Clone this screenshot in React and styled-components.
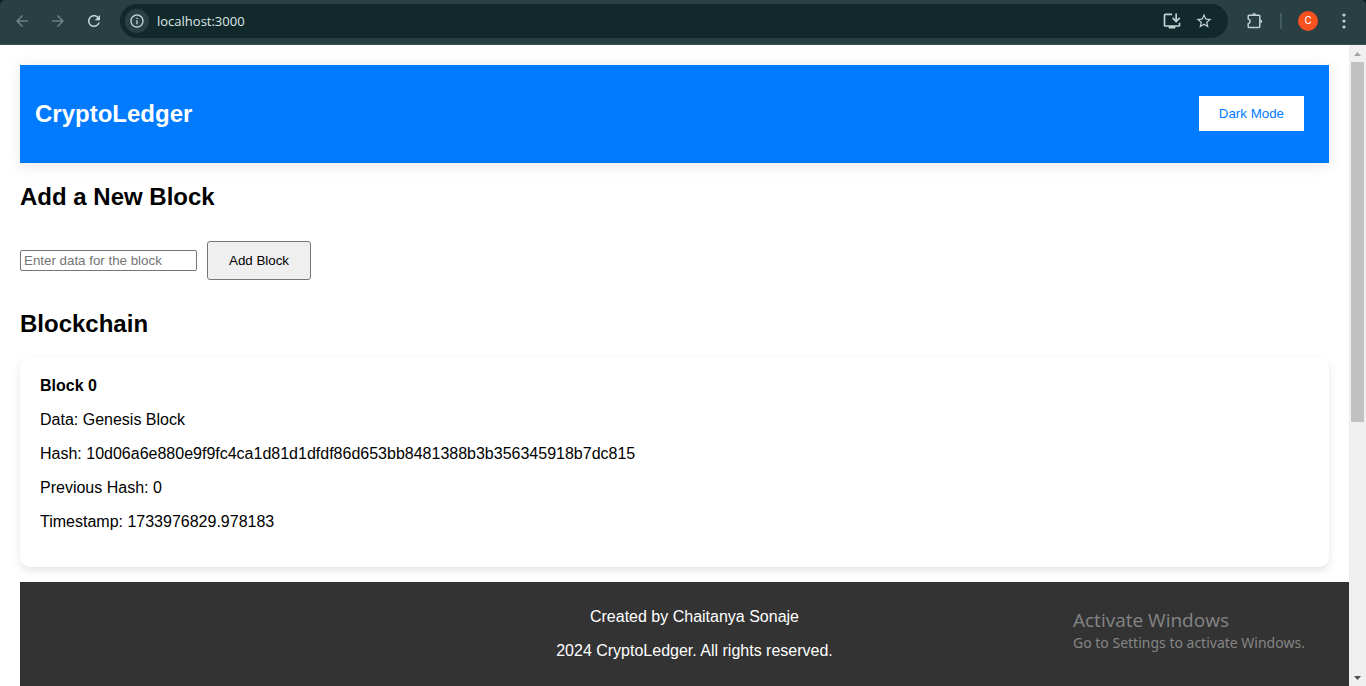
import React, { useState } from "react";
import styled, { createGlobalStyle } from "styled-components";

const GlobalStyle = createGlobalStyle`
  *, *::before, *::after { box-sizing: border-box; }
  body {
    margin: 0;
    background: #0d1c1f;
    font-family: Arial, "Liberation Sans", sans-serif;
    font-size: 16px;
    line-height: 18px;
    color: #000;
  }
`;

const Window = styled.div`
  display: flex;
  flex-direction: column;
  height: 100vh;
  overflow: hidden;
`;

const Toolbar = styled.header`
  display: flex;
  align-items: center;
  flex: none;
  height: 45px;
  padding: 0 10px 2px;
  background: #283f43;
  border-bottom: 1px solid #3b5054;
  border-radius: 5px 5px 0 0;
`;

const ToolButton = styled.button`
  display: grid;
  place-items: center;
  flex: none;
  width: 24px;
  height: 24px;
  padding: 0;
  border: 0;
  border-radius: 12px;
  background: ${(p) => p.$fill || "transparent"};
  color: ${(p) => p.$color || "#c3d2d4"};
`;

const NavGroup = styled.nav`
  display: flex;
  gap: 12px;
  margin-right: 14px;
`;

const AddressBar = styled.div`
  display: flex;
  align-items: center;
  flex: 1;
  gap: 8px;
  height: 34px;
  padding: 0 12px 0 5px;
  border-radius: 17px;
  background: #12292c;
`;

const Address = styled.input`
  flex: 1;
  min-width: 0;
  padding: 0;
  border: 0;
  outline: 0;
  background: transparent;
  color: #dfe7e8;
  font: 13px/20px "Open Sans", "Noto Sans", sans-serif;
`;

const ToolActions = styled.div`
  display: flex;
  align-items: center;
  margin-left: 15px;
`;

const Separator = styled.span`
  width: 2px;
  height: 16px;
  margin: 0 16px 0 13px;
  background: #425b60;
`;

const Avatar = styled.button`
  width: 20px;
  height: 20px;
  margin-right: 14px;
  padding: 0;
  border: 0;
  border-radius: 50%;
  background: #f4511e;
  color: #fff;
  font: 11px/20px Roboto, sans-serif;
`;

const Viewport = styled.div`
  display: flex;
  flex: 1;
  min-height: 0;
  background: #fff;
`;

const Page = styled.div`
  display: flex;
  flex-direction: column;
  flex: 1;
  min-width: 0;
  padding: 20px 0 0 20px;
  overflow: hidden;
`;

const Main = styled.main`
  flex: none;
  padding-right: 20px;
`;

const Banner = styled.div`
  display: flex;
  align-items: center;
  justify-content: space-between;
  height: 98px;
  padding: 0 25px 0 15px;
  background: #007bff;
  box-shadow: 0 2px 15px rgba(0, 0, 0, 0.1);
`;

const BrandTitle = styled.h1`
  margin: 0;
  color: #fff;
  font-size: 24px;
  line-height: 28px;
`;

const ThemeButton = styled.button`
  height: 35px;
  margin-bottom: 2px;
  padding: 0 20px;
  border: 0;
  background: #fff;
  color: #007bff;
  font-family: Arial, "Liberation Sans", sans-serif;
`;

const SectionTitle = styled.h2`
  margin: 0;
  padding: ${(p) => p.$top}px 0 ${(p) => p.$bottom}px;
  font-size: 24px;
  line-height: 28px;
`;

const BlockForm = styled.form`
  display: flex;
  align-items: center;
  gap: 10px;
`;

const BlockInput = styled.input`
  width: 177px;
  height: 21px;
  padding: 1px 3px;
  border: 1px solid #767676;
  border-radius: 2px;
  background: #fff;
  font-family: Arial, "Liberation Sans", sans-serif;

  &::placeholder { color: #757575; }
`;

const SubmitButton = styled.button`
  height: 39px;
  padding: 0 21px;
  border: 1px solid #767676;
  border-radius: 3px;
  background: #efefef;
  color: #000;
  font-family: Arial, "Liberation Sans", sans-serif;
`;

const Card = styled.article`
  margin-bottom: 15px;
  padding: 20px;
  border-radius: 10px;
  background: #fff;
  box-shadow: 0 4px 8px rgba(0, 0, 0, 0.1);
`;

const CardTitle = styled.h3`
  margin: 0 0 16px;
  font-size: 16px;
  line-height: 18px;
`;

const Line = styled.p`
  margin: 0 0 16px;
`;

const Footer = styled.footer`
  position: relative;
  flex: 1 0 auto;
  padding: 26px 0 10px 20px;
  background: #333;
  color: #fff;
  text-align: center;
`;

const Watermark = styled.aside`
  position: absolute;
  top: 26px;
  right: 40px;
  width: 236px;
  color: #858585;
  font-family: "Noto Sans", "Open Sans", sans-serif;
  text-align: left;
`;

const WatermarkTitle = styled.div`
  font-family: "Open Sans", "Noto Sans", sans-serif;
  font-size: 19px;
  line-height: 24px;
`;

const WatermarkHint = styled.div`
  font-size: 14px;
  line-height: 22px;
`;

const ScrollTrack = styled.div`
  display: flex;
  flex-direction: column;
  align-items: center;
  flex: none;
  width: 17px;
  background: #f0f0f0;
`;

const ScrollArrow = styled.button`
  display: grid;
  place-items: center;
  flex: none;
  width: 17px;
  height: 17px;
  padding: 0;
  border: 0;
  background: transparent;
  color: ${(p) => p.$color};
`;

const ScrollSpace = styled.div`
  flex: 1;
  width: 13px;
`;

const ScrollThumb = styled.div`
  height: 59.3%;
  background: #c1c1c1;
`;

const paths = {
  back: "M20 11H7.83l5.59-5.59L12 4l-8 8 8 8 1.41-1.41L7.83 13H20v-2z",
  forward: "M12 4l-1.41 1.41L16.17 11H4v2h12.17l-5.58 5.59L12 20l8-8z",
  reload:
    "M17.65 6.35C16.2 4.9 14.21 4 12 4c-4.42 0-7.99 3.58-7.99 8s3.57 8 7.99 8c3.73 0 6.84-2.55 7.73-6h-2.08c-.82 2.33-3.04 4-5.65 4-3.31 0-6-2.69-6-6s2.69-6 6-6c1.66 0 3.14.69 4.22 1.78L13 11h7V4l-2.35 2.35z",
  info:
    "M11 7h2v2h-2zm0 4h2v6h-2zm1-9C6.48 2 2 6.48 2 12s4.48 10 10 10 10-4.48 10-10S17.52 2 12 2zm0 18c-4.41 0-8-3.59-8-8s3.59-8 8-8 8 3.59 8 8-3.59 8-8 8z",
  install:
    "M20 17H4V5h8V3H4c-1.1 0-2 .9-2 2v12c0 1.1.9 2 2 2h4v2h8v-2h4c1.1 0 2-.9 2-2v-3h-2v3zM17 14l5-5-1.41-1.41L18 10.17V3h-2v7.17l-2.59-2.58L12 9z",
  star:
    "M22 9.24l-7.19-.62L12 2 9.19 8.63 2 9.24l5.46 4.73L5.82 21 12 17.27 18.18 21l-1.63-7.03L22 9.24zM12 15.4l-3.76 2.27 1-4.28-3.32-2.88 4.38-.38L12 6.1l1.71 4.04 4.38.38-3.32 2.88 1 4.28L12 15.4z",
};

function Icon({ name, size }) {
  return (
    <svg width={size} height={size} viewBox="0 0 24 24" fill="currentColor" aria-hidden="true">
      <path d={paths[name]} />
    </svg>
  );
}

function PuzzleIcon() {
  return (
    <svg width="20" height="20" viewBox="0 0 20 20" aria-hidden="true">
      <path
        d="M4 4.2H14Q14.8 4.2 14.8 5V15.6Q14.8 16.4 14 16.4H4Q3.2 16.4 3.2 15.6V12.7C4.5 12.4 5.2 11.5 5.2 10.3S4.5 8.2 3.2 7.9V5Q3.2 4.2 4 4.2Z"
        fill="none"
        stroke="currentColor"
        strokeWidth="1.5"
        strokeLinejoin="round"
      />
      <path d="M7.2 3.8a1.9 1.9 0 0 1 3.8 0zM15.3 8.4a1.9 1.9 0 0 1 0 3.8z" fill="currentColor" />
    </svg>
  );
}

function DotsIcon() {
  return (
    <svg width="4" height="16" viewBox="0 0 4 16" fill="currentColor" aria-hidden="true">
      <circle cx="2" cy="2" r="1.6" />
      <circle cx="2" cy="8" r="1.6" />
      <circle cx="2" cy="14" r="1.6" />
    </svg>
  );
}

function Triangle({ down }) {
  return (
    <svg width="7" height="4" viewBox="0 0 7 4" fill="currentColor" aria-hidden="true">
      <path d={down ? "M0 0h7L3.5 4z" : "M0 4h7L3.5 0z"} />
    </svg>
  );
}

const blocks = [
  {
    index: 0,
    data: "Genesis Block",
    hash: "10d06a6e880e9f9fc4ca1d81d1dfdf86d653bb8481388b3b356345918b7dc815",
    previous: "0",
    timestamp: "1733976829.978183",
  },
];

function BrowserBar() {
  return (
    <Toolbar>
      <NavGroup aria-label="Browser navigation">
        <ToolButton aria-label="Back" $color="#6d8084"><Icon name="back" size={18} /></ToolButton>
        <ToolButton aria-label="Forward" $color="#6d8084"><Icon name="forward" size={18} /></ToolButton>
        <ToolButton aria-label="Reload"><Icon name="reload" size={18} /></ToolButton>
      </NavGroup>
      <AddressBar>
        <ToolButton aria-label="Site information" $fill="#283f43"><Icon name="info" size={16} /></ToolButton>
        <Address aria-label="Address" defaultValue="localhost:3000" />
        <ToolButton aria-label="Install app"><Icon name="install" size={20} /></ToolButton>
        <ToolButton aria-label="Bookmark"><Icon name="star" size={18} /></ToolButton>
      </AddressBar>
      <ToolActions>
        <ToolButton aria-label="Extensions"><PuzzleIcon /></ToolButton>
        <Separator />
        <Avatar aria-label="Profile">C</Avatar>
        <ToolButton aria-label="Menu"><DotsIcon /></ToolButton>
      </ToolActions>
    </Toolbar>
  );
}

function BlockCard({ block }) {
  return (
    <Card>
      <CardTitle>Block {block.index}</CardTitle>
      <Line>Data: {block.data}</Line>
      <Line>Hash: {block.hash}</Line>
      <Line>Previous Hash: {block.previous}</Line>
      <Line>Timestamp: {block.timestamp}</Line>
    </Card>
  );
}

export default function App() {
  const [data, setData] = useState("");
  return (
    <Window>
      <GlobalStyle />
      <BrowserBar />
      <Viewport>
        <Page>
          <Main>
            <Banner>
              <BrandTitle>CryptoLedger</BrandTitle>
              <ThemeButton type="button">Dark Mode</ThemeButton>
            </Banner>
            <SectionTitle $top={20} $bottom={30}>Add a New Block</SectionTitle>
            <BlockForm onSubmit={(e) => e.preventDefault()}>
              <BlockInput
                aria-label="Block data"
                placeholder="Enter data for the block"
                value={data}
                onChange={(e) => setData(e.target.value)}
              />
              <SubmitButton type="submit">Add Block</SubmitButton>
            </BlockForm>
            <SectionTitle $top={30} $bottom={19}>Blockchain</SectionTitle>
            {blocks.map((block) => (
              <BlockCard key={block.index} block={block} />
            ))}
          </Main>
          <Footer>
            <Line>Created by Chaitanya Sonaje</Line>
            <Line>2024 CryptoLedger. All rights reserved.</Line>
            <Watermark>
              <WatermarkTitle>Activate Windows</WatermarkTitle>
              <WatermarkHint>Go to Settings to activate Windows.</WatermarkHint>
            </Watermark>
          </Footer>
        </Page>
        <ScrollTrack>
          <ScrollArrow aria-label="Scroll up" $color="#a3a3a3"><Triangle /></ScrollArrow>
          <ScrollSpace><ScrollThumb /></ScrollSpace>
          <ScrollArrow aria-label="Scroll down" $color="#505050"><Triangle down /></ScrollArrow>
        </ScrollTrack>
      </Viewport>
    </Window>
  );
}
